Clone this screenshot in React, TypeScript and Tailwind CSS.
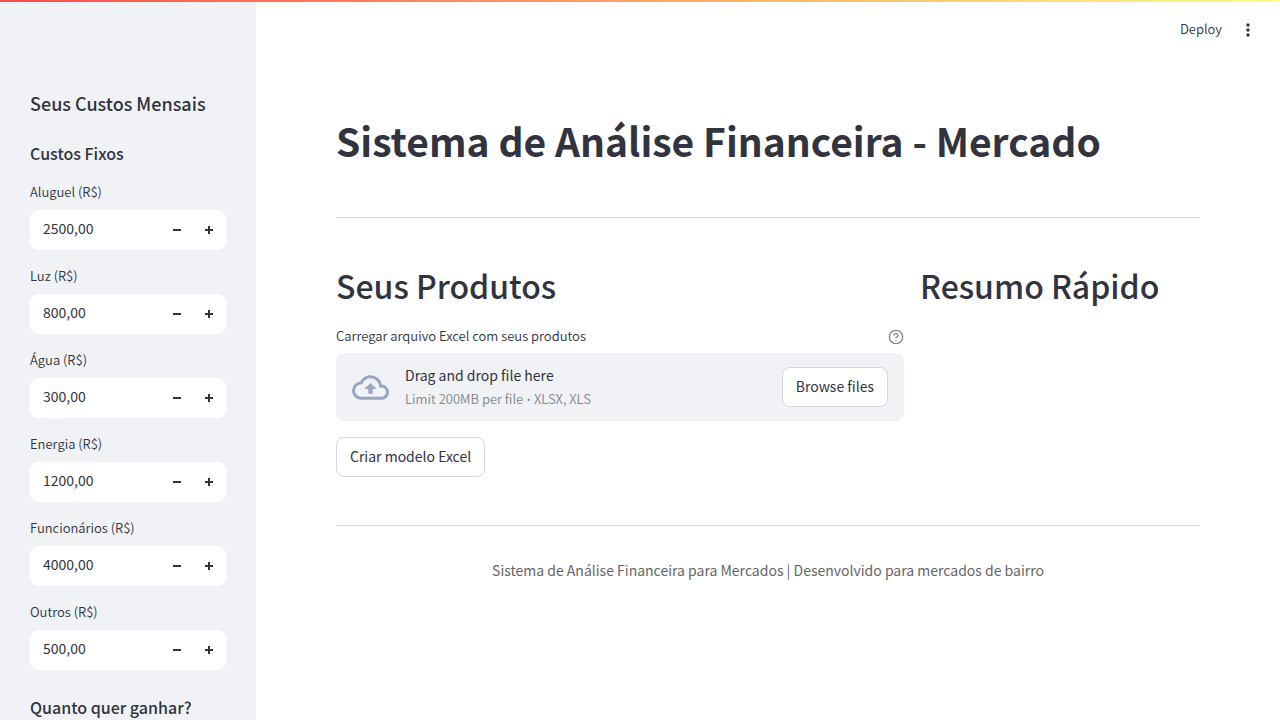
import { useState } from "react";
import { CircleQuestionMark } from "lucide-react";
import { MdMoreVert, MdOutlineCloudUpload } from "react-icons/md";

type Cost = { id: string; label: string; value: number };

const fixedCosts: Cost[] = [
  { id: "aluguel", label: "Aluguel (R$)", value: 2500 },
  { id: "luz", label: "Luz (R$)", value: 800 },
  { id: "agua", label: "Água (R$)", value: 300 },
  { id: "energia", label: "Energia (R$)", value: 1200 },
  { id: "funcionarios", label: "Funcionários (R$)", value: 4000 },
  { id: "outros", label: "Outros (R$)", value: 500 },
];

const format = (n: number) => n.toFixed(2).replace(".", ",");

function NumberField({ cost }: { cost: Cost }) {
  const [text, setText] = useState(format(cost.value));
  const step = (delta: number) => {
    const current = parseFloat(text.replace(",", ".")) || 0;
    setText(format(Math.max(0, current + delta)));
  };
  return (
    <div className="flex flex-col gap-2">
      <label htmlFor={cost.id} className="text-[13px] leading-5 font-[350]">
        {cost.label}
      </label>
      <div className="flex h-10 overflow-hidden rounded-lg border border-white bg-white focus-within:border-[#ff4b4b]">
        <input
          id={cost.id}
          type="text"
          inputMode="decimal"
          value={text}
          onChange={(e) => setText(e.target.value)}
          className="min-w-0 flex-1 bg-transparent px-3 pb-1 text-sm outline-none"
        />
        <button
          type="button"
          aria-label={`Diminuir ${cost.label}`}
          onClick={() => step(-100)}
          className="flex w-8 items-center justify-center"
        >
          <svg viewBox="0 0 8 8" className="size-2 fill-current" aria-hidden="true">
            <path d="M0 3v2h8V3z" />
          </svg>
        </button>
        <button
          type="button"
          aria-label={`Aumentar ${cost.label}`}
          onClick={() => step(100)}
          className="flex w-8 items-center justify-center"
        >
          <svg viewBox="0 0 8 8" className="size-2 fill-current" aria-hidden="true">
            <path d="M3 0v3H0v2h3v3h2V5h3V3H5V0z" />
          </svg>
        </button>
      </div>
    </div>
  );
}

function Sidebar() {
  return (
    <aside className="w-64 shrink-0 overflow-hidden bg-[#f0f2f6] px-[30px] pt-[89px]">
      <h2 className="text-lg leading-7 font-medium">Seus Custos Mensais</h2>
      <h3 className="mt-6 text-base leading-6 font-medium">Custos Fixos</h3>
      <div className="mt-[17px] flex flex-col gap-4">
        {fixedCosts.map((cost) => (
          <NumberField key={cost.id} cost={cost} />
        ))}
      </div>
      <h3 className="mt-[25px] text-base leading-6 font-medium">Quanto quer ganhar?</h3>
    </aside>
  );
}

export default function App() {
  return (
    <div className="flex h-screen overflow-hidden bg-white font-['Noto_Sans_CJK_SC','Noto_Sans',sans-serif] text-[#31333f]">
      <div className="absolute inset-x-0 top-0 h-0.5 bg-linear-[90deg,#ff4b4b,#fffd80]" />
      <Sidebar />
      <div className="flex min-w-0 flex-1 flex-col overflow-y-auto">
        <header className="flex h-[60px] shrink-0 items-center justify-end gap-4 pr-[22px]">
          <button type="button" className="pb-0.5 text-[13px] leading-5 font-[350]">
            Deploy
          </button>
          <button type="button" aria-label="Menu">
            <MdMoreVert className="size-5" />
          </button>
        </header>
        <main className="px-20 pt-[54px]">
          <h1 className="text-[39px] leading-[52px] font-bold">
            Sistema de Análise Financeira - Mercado
          </h1>
          <hr className="mt-[51px] border-[#d6d6d9]" />
          <div className="mt-[46px] grid grid-cols-[71fr_35fr] gap-4">
            <section>
              <h2 className="text-[32px] leading-[42px] font-medium">Seus Produtos</h2>
              <div className="mt-5 flex items-center justify-between">
                <label htmlFor="arquivo" className="text-[13px] leading-5 font-[350]">
                  Carregar arquivo Excel com seus produtos
                </label>
                <button type="button" aria-label="Ajuda" className="pt-0.5 text-[#83848c]">
                  <CircleQuestionMark className="size-4" />
                </button>
              </div>
              <div className="mt-[7px] flex items-center rounded-lg bg-[#f0f2f6] px-4 py-2.5">
                <MdOutlineCloudUpload className="size-[37px] shrink-0 text-[#97a6c3]" />
                <div className="ml-4 flex-1">
                  <p className="text-sm leading-6">Drag and drop file here</p>
                  <p className="text-[13px] leading-6 font-[350] text-[#83848c]">
                    Limit 200MB per file <span className="font-['Noto_Sans',sans-serif]">•</span> XLSX, XLS
                  </p>
                </div>
                <input id="arquivo" type="file" accept=".xlsx,.xls" className="hidden" />
                <button
                  type="button"
                  onClick={() => document.getElementById("arquivo")?.click()}
                  className="h-10 rounded-lg border border-[#d6d6d9] bg-white px-[13px] pb-0.5 text-sm"
                >
                  Browse files
                </button>
              </div>
              <button
                type="button"
                className="mt-4 h-10 rounded-lg border border-[#d6d6d9] bg-white px-[13px] pb-0.5 text-sm"
              >
                Criar modelo Excel
              </button>
            </section>
            <section>
              <h2 className="text-[32px] leading-[42px] font-medium">Resumo Rápido</h2>
            </section>
          </div>
          <hr className="mt-12 border-[#d6d6d9]" />
          <p className="mt-8 text-center text-sm leading-6 text-[#666666]">
            Sistema de Análise Financeira para Mercados | Desenvolvido para mercados de bairro
          </p>
        </main>
      </div>
    </div>
  );
}
